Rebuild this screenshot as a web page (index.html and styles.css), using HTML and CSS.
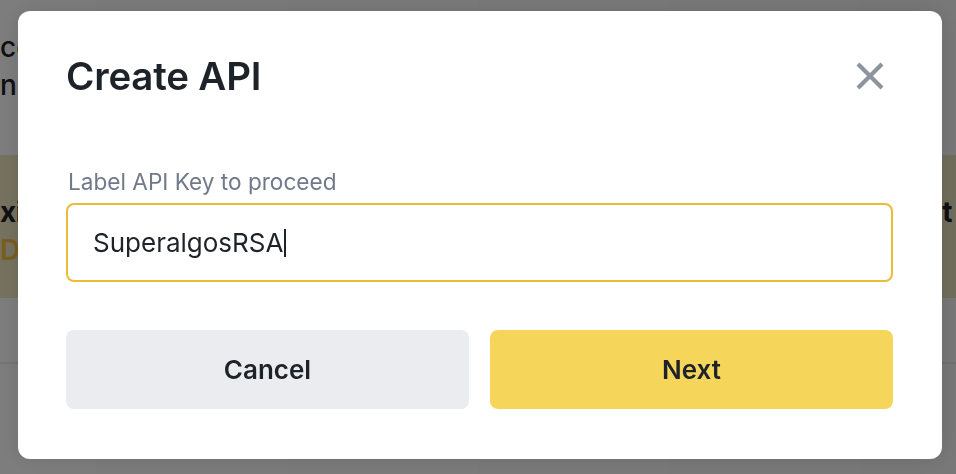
FILE: index.html
```html
<!DOCTYPE html>
<html lang="en">
<head>
<meta charset="utf-8">
<title>Create API</title>
<link rel="stylesheet" href="styles.css">
</head>
<body>
<main class="page">
  <section class="intro">
    <p class="intro-line">ce</p>
    <p class="intro-line">n</p>
  </section>
  <section class="banner">
    <div class="banner-left">
      <p class="banner-title">xis</p>
      <p class="banner-link">De</p>
    </div>
    <div class="banner-right">
      <p class="banner-title">t</p>
    </div>
  </section>
  <hr class="divider">
</main>

<div class="overlay">
  <div class="modal" role="dialog" aria-labelledby="modal-title">
    <header class="modal-header">
      <h1 id="modal-title" class="modal-title">Create API</h1>
      <button class="close-btn" aria-label="Close">
        <svg width="30" height="30" viewBox="0 0 30 30" aria-hidden="true">
          <path d="M3 3 L27 27 M27 3 L3 27" stroke="currentColor" stroke-width="4.2" fill="none"/>
        </svg>
      </button>
    </header>
    <label class="field-label">Label API Key to proceed</label>
    <div class="field" role="textbox">SuperalgosRSA<span class="caret"></span></div>
    <div class="actions">
      <button class="btn btn-cancel">Cancel</button>
      <button class="btn btn-next">Next</button>
    </div>
  </div>
</div>
</body>
</html>
```
FILE: styles.css
```css
* { box-sizing: border-box; }
html, body { margin: 0; padding: 0; }
body {
  width: 956px;
  height: 474px;
  overflow: hidden;
  background: #ffffff;
  font-family: "Inter", "Noto Sans", sans-serif;
  color: #1e2329;
}
p { margin: 0; }

.page { padding-top: 28px; }
.intro-line {
  font-size: 28px;
  line-height: 38px;
  font-weight: 500;
  color: #1e2329;
}
.banner {
  margin-top: 51px;
  height: 143px;
  background: #f0e8c2;
  display: flex;
  justify-content: space-between;
  padding-top: 38px;
}
.banner-left { margin-left: 0; }
.banner-right { margin-right: 4px; }
.banner-title {
  font-size: 28px;
  line-height: 38px;
  font-weight: 700;
  color: #1e2329;
  letter-spacing: -0.5px;
}
.banner-link {
  font-size: 28px;
  line-height: 38px;
  font-weight: 600;
  color: #f7bf40;
}
.divider {
  margin: 64px 0 0;
  border: 0;
  border-top: 2px solid #eaecef;
}

.overlay {
  position: fixed;
  inset: 0;
  background: linear-gradient(90deg, rgba(0,0,0,0.51), rgba(0,0,0,0.53));
  padding: 11px 0 0 18px;
}
.modal {
  width: 924px;
  height: 448px;
  background: #ffffff;
  border-radius: 12px;
  box-shadow: 0 0 24px rgba(0,0,0,0.12);
  padding: 41px 49px 0 48px;
  display: flex;
  flex-direction: column;
}
.modal-header {
  display: flex;
  justify-content: space-between;
  align-items: center;
  height: 48px;
}
.modal-title {
  margin: 0;
  font-size: 38.5px;
  font-weight: 600;
  color: #1e2329;
  letter-spacing: -0.2px;
}
.close-btn {
  border: 0;
  background: none;
  padding: 0;
  margin-right: 8px;
  color: #8d949d;
  width: 30px;
  height: 30px;
  display: flex;
}
.field-label {
  margin-top: 68px;
  font-size: 22.6px;
  line-height: 28px;
  color: #707a8a;
  padding-left: 2px;
}
.field {
  margin-top: 7px;
  height: 79px;
  flex: none;
  border: 2px solid #ebbc3a;
  border-radius: 8px;
  padding-left: 25px;
  display: flex;
  align-items: center;
  font-size: 26px;
  color: #1e2329;
}
.caret {
  display: inline-block;
  width: 2px;
  height: 28px;
  background: #1e2329;
  margin-left: 1px;
}
.actions {
  margin-top: 48px;
  display: flex;
  gap: 21px;
}
.btn {
  flex: 1;
  height: 79px;
  border: 0;
  border-radius: 8px;
  font-family: inherit;
  font-size: 26px;
  font-weight: 600;
  color: #1e2329;
}
.btn-cancel { background: #eaecef; }
.btn-next { background: #f6d65a; }
```
